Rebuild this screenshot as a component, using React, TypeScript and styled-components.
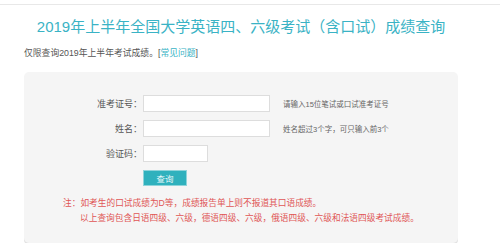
import React from 'react';
import styled, { createGlobalStyle } from 'styled-components';

const GlobalStyle = createGlobalStyle`
  body {
    margin: 0;
    background: #fff;
    font-family: 'Liberation Sans', 'Noto Sans CJK SC', sans-serif;
  }
`;

interface Field {
  label: string;
  width: number;
  hint?: string;
}

const fields: Field[] = [
  { label: '准考证号：', width: 127, hint: '请输入15位笔试或口试准考证号' },
  { label: '姓名：', width: 127, hint: '姓名超过3个字，可只输入前3个' },
  { label: '验证码：', width: 65 },
];

const App = () => {
  return (
    <>
      <GlobalStyle />
      <TopRule />
      <Wrapper>
        <Title>2019年上半年全国大学英语四、六级考试（含口试）成绩查询</Title>
        <Sub>
          仅限查询2019年上半年考试成绩。[<Link>常见问题</Link>]
        </Sub>
        <Panel>
          <Form>
            {fields.map((f) => (
              <React.Fragment key={f.label}>
                <Label>{f.label}</Label>
                <Input $width={f.width} />
                <Hint>{f.hint}</Hint>
              </React.Fragment>
            ))}
          </Form>
          <Button>查询</Button>
          <Notes>
            <Note>注：如考生的口试成绩为D等，成绩报告单上则不报道其口语成绩。</Note>
            <Note $indent>以上查询包含日语四级、六级，德语四级、六级，俄语四级、六级和法语四级考试成绩。</Note>
          </Notes>
        </Panel>
      </Wrapper>
    </>
  );
};

const TopRule = styled.div`
  height: 4px;
  border-bottom: 1px solid #e8e8e8;
`;
const Wrapper = styled.div`
  margin-left: 24px;
  width: 434px;
`;
const Title = styled.h1`
  margin: 11px 0 0;
  font-size: 15px;
  font-weight: normal;
  line-height: 22px;
  text-align: center;
  color: #3ab3c5;
  white-space: nowrap;
`;
const Sub = styled.div`
  margin-top: 9px;
  font-size: 8.8px;
  line-height: 12px;
  color: #555;
`;
const Link = styled.span`
  color: #3ab3c5;
`;
const Panel = styled.div`
  margin-top: 13px;
  padding: 23px 0 17px;
  background: #f5f5f5;
  border-radius: 5px;
  box-shadow: 0 2px 0 #e2e2e2;
`;
const Form = styled.div`
  display: grid;
  grid-template-columns: 119px auto 1fr;
  row-gap: 8px;
  align-items: center;
`;
const Label = styled.span`
  justify-self: end;
  padding-right: 1px;
  font-size: 9px;
  color: #555;
`;
const Input = styled.div<{ $width: number }>`
  width: ${(p) => p.$width}px;
  height: 17px;
  box-sizing: border-box;
  background: #fff;
  border: 1px solid #ddd;
`;
const Hint = styled.span`
  margin-left: 13px;
  font-size: 7.5px;
  color: #666;
`;
const Button = styled.div`
  margin: 8px 0 0 119px;
  width: 44px;
  height: 16px;
  line-height: 16px;
  text-align: center;
  background: #2fb1bd;
  color: #e8f8fa;
  font-size: 8.5px;
  border: 1px solid #8fd4da;
  box-sizing: border-box;
`;
const Notes = styled.div`
  margin-top: 10px;
  padding-left: 39px;
`;
const Note = styled.div<{ $indent?: boolean }>`
  font-size: 8.7px;
  line-height: 15px;
  color: #e05555;
  white-space: nowrap;
  padding-left: ${(p) => (p.$indent ? '17px' : '0')};
`;

export default App;
